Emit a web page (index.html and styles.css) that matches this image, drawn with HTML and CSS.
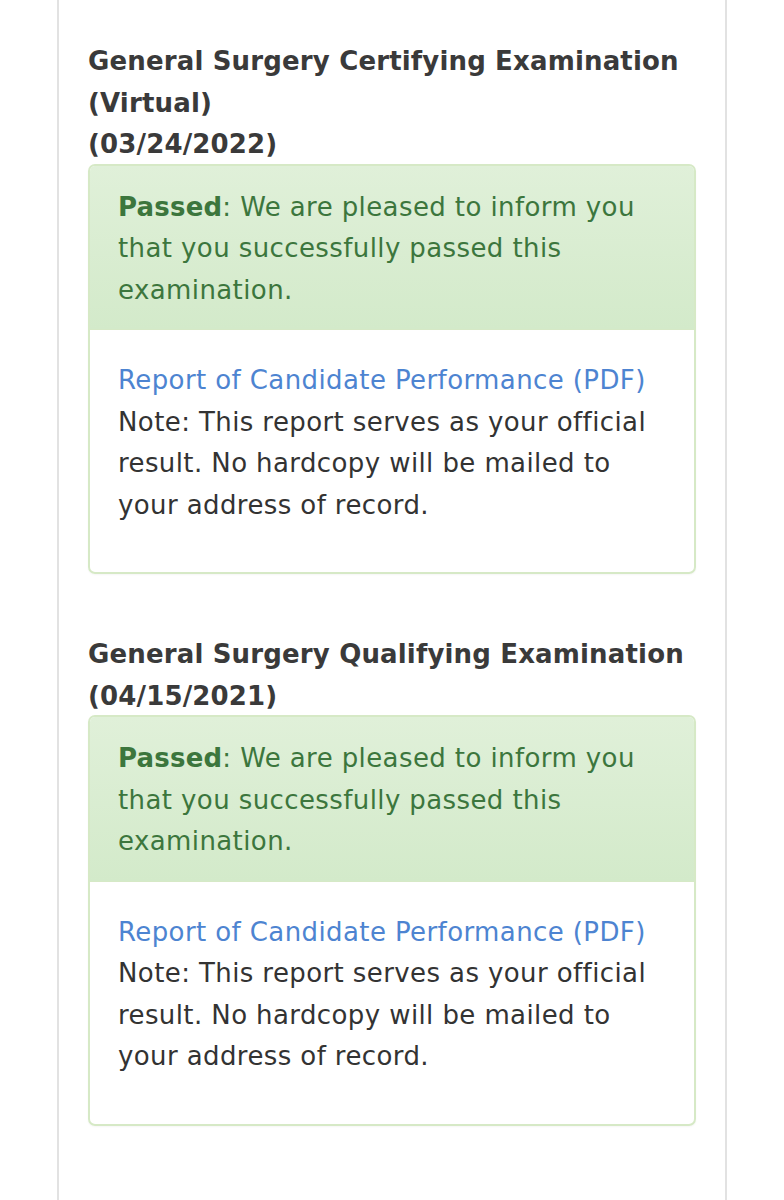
FILE: index.html
```html
<!DOCTYPE html>
<html lang="en">
<head>
<meta charset="utf-8">
<title>Examination Results</title>
<link rel="stylesheet" href="styles.css">
</head>
<body>
<div class="page">
  <div class="exam">
    <h4 class="exam-title">General Surgery Certifying Examination (Virtual)<br>(03/24/2022)</h4>
    <div class="panel">
      <div class="panel-heading"><strong>Passed</strong>: We are pleased to inform you that you successfully passed this examination.</div>
      <div class="panel-body">
        <a class="report" href="#">Report of Candidate Performance (PDF)</a><br>
        Note: This report serves as your official result. No hardcopy will be mailed to your address of record.
      </div>
    </div>
  </div>
  <div class="exam">
    <h4 class="exam-title">General Surgery Qualifying Examination<br>(04/15/2021)</h4>
    <div class="panel">
      <div class="panel-heading"><strong>Passed</strong>: We are pleased to inform you that you successfully passed this examination.</div>
      <div class="panel-body">
        <a class="report" href="#">Report of Candidate Performance (PDF)</a><br>
        Note: This report serves as your official result. No hardcopy will be mailed to your address of record.
      </div>
    </div>
  </div>
</div>
</body>
</html>
```
FILE: styles.css
```css
html, body {
  margin: 0;
  padding: 0;
  background: #ffffff;
}
body {
  font-family: "DejaVu Sans", Verdana, sans-serif;
  font-size: 26px;
  line-height: 41.5px;
  letter-spacing: 0.4px;
  color: #333333;
}
.page {
  margin-left: 57px;
  width: 670px;
  min-height: 1200px;
  border-left: 2px solid #e2e2e2;
  border-right: 2px solid #e2e2e2;
  padding: 41px 29px 0 29px;
  box-sizing: border-box;
}
.exam {
  margin-bottom: 60px;
}
.exam-title {
  margin: 0;
  font-size: 26px;
  font-weight: bold;
  letter-spacing: 0.16px;
  color: #3a3a3a;
  line-height: 41.5px;
}
.panel {
  margin-top: -2px;
  width: 608px;
  border: 2px solid #d6e9c6;
  border-radius: 7px;
  box-sizing: border-box;
  overflow: hidden;
  box-shadow: 0 1px 2px rgba(0,0,0,0.04);
}
.panel-heading {
  background: linear-gradient(to bottom, #e0f0d9 0%, #d3eaca 100%);
  color: #3c763d;
  padding: 21px 28px 18px 28px;
  border-bottom: 1px solid #d6e9c6;
}
.panel-heading strong {
  font-weight: bold;
  letter-spacing: 0.2px;
}
.panel-body {
  padding: 30px 28px 46px 28px;
  color: #333333;
}
.report {
  color: #4d84d1;
  text-decoration: none;
}
```
